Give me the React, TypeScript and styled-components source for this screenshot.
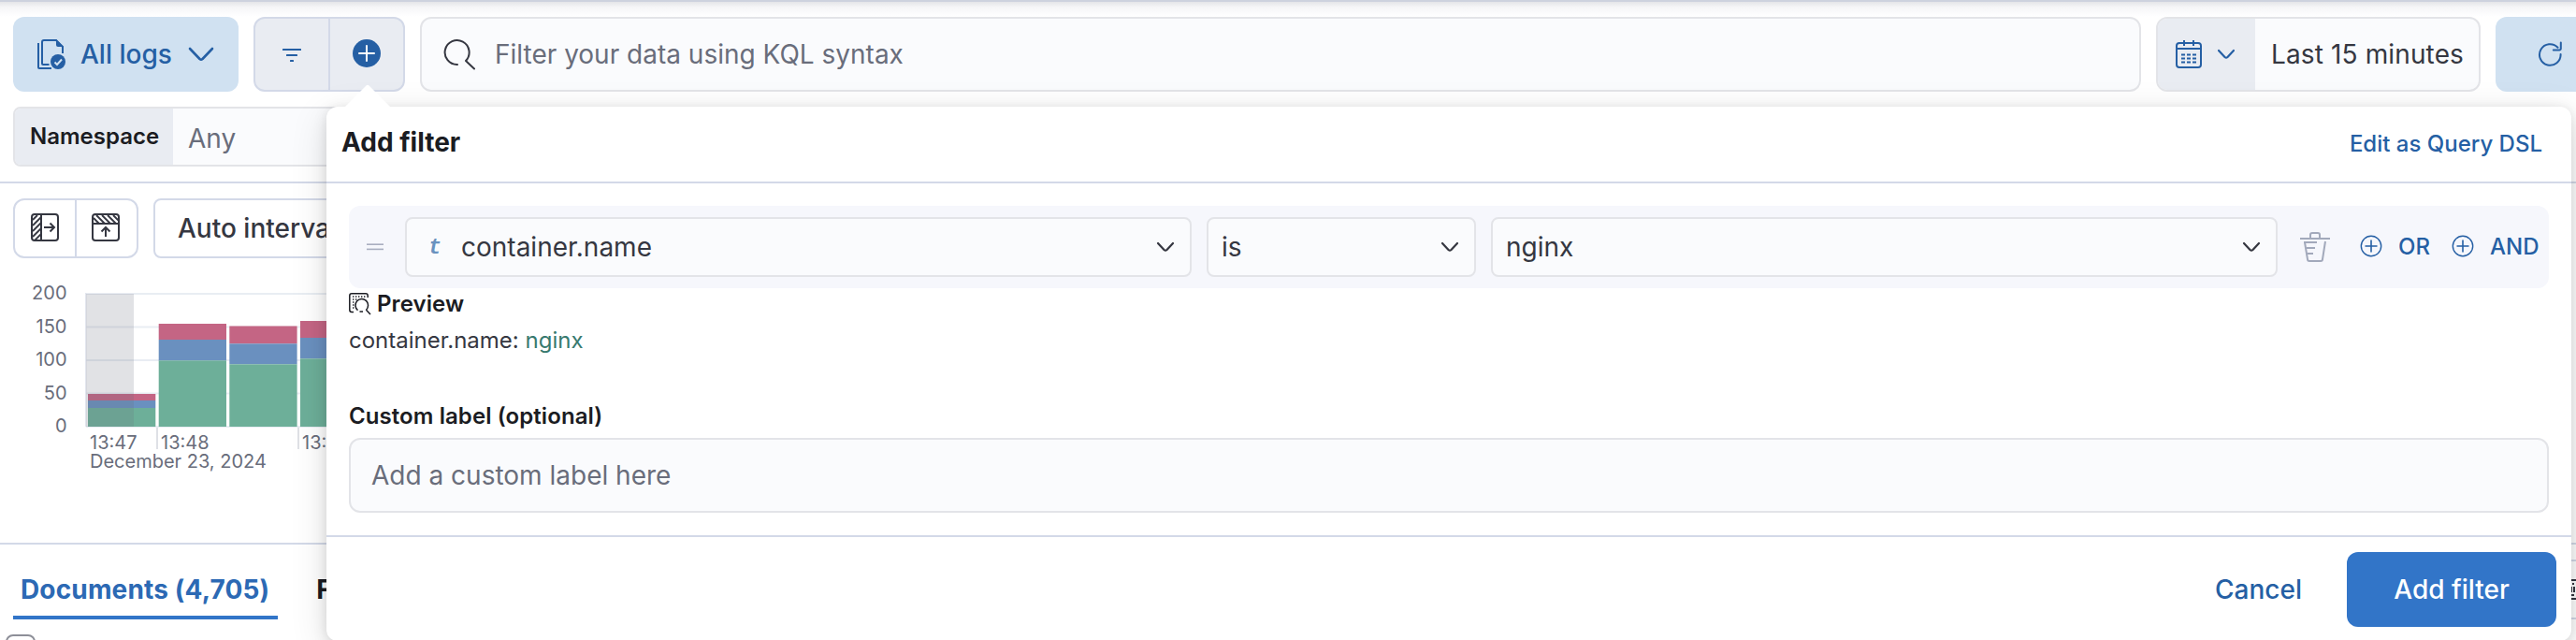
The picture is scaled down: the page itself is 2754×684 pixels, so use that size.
import React from 'react';
import styled, { createGlobalStyle } from 'styled-components';

const c = {
  link: '#255fa4',
  primary: '#3275c8',
  text: '#353741',
  title: '#1b1c22',
  subdued: '#696d7b',
  border: '#d3d9e8',
  fieldBorder: '#e3e4e8',
  field: '#fafbfd',
  shade: '#e9ecf2',
  lightBlue: '#d0e1f1',
};

const GlobalStyle = createGlobalStyle`
  * { box-sizing: border-box; }
  body {
    margin: 0;
    background: #fff;
    overflow: hidden;
    font-family: Inter, "Liberation Sans", sans-serif;
    font-size: 28px;
    color: ${c.text};
  }
  button, input { font: inherit; color: inherit; margin: 0; }
  svg { display: block; flex: none; }
`;

const Page = styled.div`
  position: relative;
  width: 2754px;
  height: 684px;
  overflow: hidden;
  white-space: nowrap;
`;

const HeaderEdge = styled.div`
  height: 18px;
  border-top: 2px solid #cdd2de;
  background: linear-gradient(#e4e5e8, #f5f5f7 35%, #fdfdfe 85%, #fff);
`;

const QueryBar = styled.div`
  display: flex;
  gap: 16px;
  padding-left: 14px;
  height: 80px;
`;

const SoftButton = styled.button<{ $width: number; $inset?: number }>`
  display: flex;
  align-items: center;
  flex: none;
  width: ${p => p.$width}px;
  height: 80px;
  padding: 0 0 0 ${p => p.$inset ?? 26}px;
  border: 0;
  border-radius: 12px;
  background: ${c.lightBlue};
  color: ${c.link};
  font-weight: 500;
`;

const SoftLabel = styled.span`
  flex: none;
  width: 131px;
  padding-left: 16px;
  text-align: left;
`;

const IconGroup = styled.div<{ $filled?: boolean; $height: number }>`
  display: flex;
  flex: none;
  height: ${p => p.$height}px;
  border: 2px solid ${c.border};
  border-radius: 12px;
  background: ${p => (p.$filled ? c.shade : '#fff')};
`;

const GroupButton = styled.button<{ $width: number }>`
  display: flex;
  align-items: center;
  justify-content: center;
  width: ${p => p.$width}px;
  padding: 0;
  border: 0;
  background: none;
  & + & { border-left: 2px solid ${c.border}; }
`;

const SearchField = styled.div`
  display: flex;
  align-items: center;
  flex: none;
  width: 1840px;
  padding-left: 22px;
  gap: 20px;
  border: 2px solid ${c.fieldBorder};
  border-radius: 12px;
  background: ${c.field};
  color: ${c.subdued};
`;

const DatePicker = styled.div`
  display: flex;
  flex: none;
  width: 347px;
  border: 2px solid ${c.fieldBorder};
  border-radius: 12px;
  background: ${c.field};
  overflow: hidden;
`;

const QuickSelect = styled.div`
  display: flex;
  align-items: center;
  width: 104px;
  padding-left: 18px;
  gap: 15px;
  background: ${c.shade};
`;

const DateText = styled.div`
  display: flex;
  align-items: center;
  padding-left: 17px;
  letter-spacing: 0.13px;
`;

const Controls = styled.div`
  padding: 16px 0 16px 14px;
  height: 98px;
  border-bottom: 2px solid ${c.border};
`;

const ControlFrame = styled.div`
  display: flex;
  width: 560px;
  height: 64px;
  border: 2px solid ${c.fieldBorder};
  border-radius: 8px;
  background: ${c.field};
  overflow: hidden;
`;

const ControlLabel = styled.div`
  width: 169px;
  padding: 13px 0 0 16px;
  background: ${c.shade};
  color: ${c.title};
  font-size: 24px;
  line-height: 34px;
  font-weight: 600;
`;

const ControlValue = styled.div`
  padding: 14px 0 0 16px;
  line-height: 36px;
  color: ${c.subdued};
`;

const ChartToolbar = styled.div`
  display: flex;
  gap: 16px;
  padding: 16px 0 0 14px;
`;

const IntervalButton = styled.button`
  width: 320px;
  height: 64px;
  padding: 0 0 1px 24px;
  text-align: left;
  border: 2px solid ${c.border};
  border-radius: 8px;
  background: #fff;
  font-weight: 500;
`;

const ChartArea = styled.div`
  height: 306px;
  padding-top: 14px;
  border-bottom: 2px solid ${c.border};
  text { font-size: 20px; fill: ${c.subdued}; }
`;

const Tabs = styled.div`
  display: flex;
  height: 80px;
  padding-left: 14px;
  gap: 33px;
`;

const Tab = styled.div<{ $active?: boolean }>`
  height: 80px;
  padding: 30px 9px 0 8px;
  line-height: 36px;
  font-weight: 700;
  letter-spacing: 0.15px;
  color: ${p => (p.$active ? '#2c69b4' : c.title)};
  border-bottom: 4px solid ${p => (p.$active ? c.primary : 'transparent')};
`;

const TableHead = styled.div`
  padding: 16px 0 0 6px;
`;

const Checkbox = styled.div`
  width: 32px;
  height: 32px;
  border: 2px solid #8d8f98;
  border-radius: 8px;
`;

const GridControls = styled.div`
  position: absolute;
  right: 0;
  top: 598px;
  width: 60px;
  height: 64px;
  display: flex;
  align-items: center;
  justify-content: flex-end;
  border: 2px solid ${c.border};
  border-width: 2px 0;
`;

const Popover = styled.section`
  position: absolute;
  left: 349px;
  top: 114px;
  width: 2400px;
  height: 571px;
  border-radius: 12px;
  background: #fff;
  box-shadow: 0 10px 40px rgba(0, 0, 0, 0.12), 0 4px 16px rgba(0, 0, 0, 0.1), 0 0 8px rgba(0, 0, 0, 0.03);
`;

const Arrow = styled.svg`
  position: absolute;
  left: 20px;
  top: -24px;
`;

const PopoverTitle = styled.header`
  display: flex;
  justify-content: space-between;
  height: 82px;
  padding: 20px 31px 0 16px;
  border-bottom: 2px solid ${c.border};
  color: ${c.title};
  font-weight: 700;
  line-height: 36px;
`;

const TextLink = styled.a`
  color: ${c.link};
  font-size: 24px;
  line-height: 40px;
  font-weight: 500;
`;

const PopoverBody = styled.div`
  display: flex;
  flex-direction: column;
  height: 378px;
  padding: 24px 24px 0;
  border-bottom: 2px solid ${c.border};
`;

const FilterRow = styled.div`
  display: flex;
  align-items: center;
  height: 88px;
  padding-left: 19px;
  border-radius: 12px;
  background: #f6f7fc;
`;

const Select = styled.div<{ $width: number; $gap: number }>`
  display: flex;
  align-items: center;
  width: ${p => p.$width}px;
  height: 64px;
  margin-left: ${p => p.$gap}px;
  padding: 0 16px 0 14px;
  border: 2px solid ${c.fieldBorder};
  border-radius: 8px;
  background: ${c.field};
`;

const SelectValue = styled.span`
  flex: 1;
`;

const TypeToken = styled.span`
  width: 32px;
  margin-right: 12px;
  padding-top: 2px;
  text-align: center;
  color: #6a92bf;
  font: italic bold 23px "Liberation Mono", monospace;
`;

const TrashButton = styled.span`
  margin-left: 24px;
  margin-right: 32px;
`;

const LogicButton = styled.span<{ $width: number }>`
  display: flex;
  align-items: center;
  width: ${p => p.$width}px;
  padding-bottom: 2px;
  gap: 17px;
  color: ${c.link};
  font-size: 24px;
  font-weight: 500;
`;

const PreviewTitle = styled.div`
  display: flex;
  gap: 6px;
  height: 32px;
  padding-top: 5px;
  color: ${c.title};
  font-size: 24px;
  line-height: 24px;
  font-weight: 600;
  letter-spacing: 0.08px;
`;

const PreviewText = styled.div`
  height: 84px;
  padding-top: 8px;
  font-size: 24px;
  line-height: 32px;
`;

const PreviewValue = styled.span`
  color: #387a6f;
`;

const FieldLabel = styled.label`
  height: 44px;
  padding-top: 5px;
  color: ${c.title};
  font-size: 24px;
  line-height: 32px;
  font-weight: 600;
  letter-spacing: 0.08px;
`;

const LabelInput = styled.input`
  width: 100%;
  height: 80px;
  padding: 0 22px;
  border: 2px solid ${c.fieldBorder};
  border-radius: 12px;
  background: ${c.field};
  &::placeholder { color: ${c.subdued}; opacity: 1; }
`;

const Footer = styled.footer`
  display: flex;
  justify-content: flex-end;
  gap: 48px;
  padding: 16px 16px 0 0;
`;

const CancelButton = styled.button`
  height: 80px;
  padding: 0;
  border: 0;
  background: none;
  color: ${c.link};
  font-weight: 500;
`;

const SubmitButton = styled.button`
  width: 224px;
  height: 80px;
  border: 0;
  border-radius: 12px;
  background: ${c.primary};
  color: #fff;
  font-weight: 500;
`;

const Chevron = ({ w = 18, color = c.text, stroke = 2.2 }) => (
  <svg width={w + 2} height={w / 2 + 4} viewBox={`0 0 ${w + 2} ${w / 2 + 4}`} fill="none" stroke={color} strokeWidth={stroke} strokeLinecap="round" strokeLinejoin="round">
    <path d={`M2 2 L${w / 2 - 0.5} ${w / 2} Q${w / 2 + 1} ${w / 2 + 1.2} ${w / 2 + 2.5} ${w / 2} L${w} 2`} />
  </svg>
);

const LogsIcon = () => (
  <svg width="30" height="32" viewBox="0 0 30 32" fill="none" stroke={c.link} strokeWidth="2">
    <path d="M1 4V30a1 1 0 0 0 1 1H15" />
    <path d="M12.5 27H6a1 1 0 0 1-1-1V3a2 2 0 0 1 2-2H20L27 8V15" />
    <path d="M20 0L28 8H22a2 2 0 0 1-2-2Z" fill={c.link} stroke="none" />
    <circle cx="22" cy="24" r="8" fill={c.link} stroke="none" />
    <path d="M18.5 24.5L21 27L26 21.5" stroke={c.lightBlue} />
  </svg>
);

const FilterIcon = () => (
  <svg width="20" height="18" viewBox="0 0 20 18" fill={c.link}>
    <rect width="20" height="2" y="3" rx=".5" /><rect x="4" y="9" width="12" height="2" rx=".5" /><rect x="8" y="15" width="4" height="2" rx=".5" />
  </svg>
);

const PlusFilled = () => (
  <svg width="30" height="32" viewBox="0 0 30 32">
    <circle cx="15" cy="15" r="15" fill={c.link} />
    <path d="M15 7V23M7 15H23" stroke="#fff" strokeWidth="2" strokeLinecap="round" />
  </svg>
);

const PlusCircle = () => (
  <svg width="24" height="24" viewBox="0 0 24 24" fill="none" stroke={c.link} strokeWidth="1.4">
    <circle cx="12" cy="12" r="10.7" />
    <path d="M12 5.5V18.5M5.5 12H18.5" strokeWidth="1.6" />
  </svg>
);

const SearchIcon = () => (
  <svg width="36" height="34" viewBox="0 0 36 34" fill="none" stroke={c.text} strokeWidth="2" strokeLinecap="round">
    <path d="M16 28A13 13 0 1 1 25 24L34 32.5" strokeLinejoin="round" />
  </svg>
);

const CalendarIcon = () => (
  <svg width="30" height="32" viewBox="0 0 30 32" fill="none" stroke={c.link} strokeWidth="2">
    <rect x="2" y="4" width="26" height="26" rx="3" />
    <path d="M10 1V7M20 1V7M2 10H28" />
    <path d="M7 16H25M7 20H25M7 24H25" strokeDasharray="4 2" transform="translate(0,0.5)" />
  </svg>
);

const RefreshIcon = () => (
  <svg width="28" height="28" viewBox="0 0 28 28" fill="none" stroke={c.link} strokeWidth="2" strokeLinecap="round" strokeLinejoin="round">
    <path d="M24.6 14A11.3 11.3 0 1 1 21.5 6.7" />
    <path d="M24.8 1.5V8a1.6 1.6 0 0 1-1.6 1.6H16.8" />
  </svg>
);

const PanelLeftIcon = () => (
  <svg width="30" height="32" viewBox="0 0 30 32" fill="none" stroke={c.text} strokeWidth="2">
    <rect x="1" y="1" width="28" height="28" rx="3" />
    <path d="M11 1V29" />
    <path d="M2 7L7 2M2 13L11 4M2 19L11 10M2 25L11 16M4 29L11 22" strokeWidth="1.8" />
    <path d="M14 15H25M20.5 10.5L25 15L20.5 19.5" />
  </svg>
);

const PanelTopIcon = () => (
  <svg width="32" height="32" viewBox="0 0 32 32" fill="none" stroke={c.text} strokeWidth="2">
    <rect x="1" y="1" width="28" height="28" rx="3" />
    <path d="M1 11H29" />
    <path d="M2 5L8 11M5 2L14 11M11 2L20 11M17 2L26 11M23 2L29 8" strokeWidth="1.8" />
    <path d="M15 25V15M10.5 19.5L15 15L19.5 19.5" />
  </svg>
);

const DragHandle = () => (
  <svg width="18" height="8" viewBox="0 0 18 8" fill="#a9aec0">
    <rect width="18" height="1.6" y=".4" /><rect y="5.6" width="18" height="1.6" />
  </svg>
);

const TrashIcon = () => (
  <svg width="32" height="32" viewBox="0 0 32 32" fill="none" stroke="#a2a9bb" strokeWidth="2">
    <path d="M0 7H32M11 6V3a2 2 0 0 1 2-2H19a2 2 0 0 1 2 2V6" />
    <path d="M4 11H18M5 11L8 29a2 2 0 0 0 2 2H22a2 2 0 0 0 2-2L27 10M7 17H16M8 23H14" />
  </svg>
);

const PreviewIcon = () => (
  <svg width="24" height="24" viewBox="0 0 24 24" fill="none" stroke={c.title} strokeWidth="1.5">
    <path d="M5 20.5H3A2.2 2.2 0 0 1 .8 18.3V3A2.2 2.2 0 0 1 3 .8H18A2.2 2.2 0 0 1 20.2 3V5" />
    <path d="M4 4H18M4 7H10M4 10H7M4 13H6M4 16H6" strokeDasharray="1.4 1.6" />
    <path d="M18.5 18.2A6.8 6.8 0 1 0 9.5 18.6M11.5 20H15M18.3 18L23 23" />
  </svg>
);

const bars = [
  { x: 94, top: 421, blue: 428, green: 436 },
  { x: 169.7, top: 346, blue: 363, green: 385.3 },
  { x: 245.3, top: 348.5, blue: 367.3, green: 389.3 },
  { x: 321, top: 343, blue: 361, green: 383.3 },
];

const Histogram = () => (
  <svg width="640" height="240" viewBox="0 290 640 240">
    {[314, 349.5, 385, 420.5, 456].map((y, i) => (
      <React.Fragment key={y}>
        <rect x="92" y={y - 1} width="540" height="2" fill="#e9edf3" />
        <text x="71.5" y={y + 6} textAnchor="end">{200 - i * 50}</text>
      </React.Fragment>
    ))}
    <rect x="91" y="313" width="1.5" height="143" fill="#e3e6ee" />
    {bars.map(b => (
      <g key={b.x}>
        <rect x={b.x} y={b.top} width="72.3" height={b.blue - b.top} fill="#c46584" />
        <rect x={b.x} y={b.blue} width="72.3" height={b.green - b.blue} fill="#6a90bf" />
        <rect x={b.x} y={b.green} width="72.3" height={456 - b.green} fill="#6daf99" />
      </g>
    ))}
    <rect x="92" y="314" width="51" height="142" fill="#6b6e7b" fillOpacity=".2" />
    <rect x="167" y="457" width="2" height="23" fill="#dfe1e6" />
    <rect x="318" y="457" width="2" height="23" fill="#dfe1e6" />
    <text x="96" y="479.5">13:47</text>
    <text x="172" y="479.5">13:48</text>
    <text x="323" y="479.5">13:50</text>
    <text x="96" y="500">December 23, 2024</text>
  </svg>
);

export default function App() {
  return (
    <Page>
      <GlobalStyle />
      <HeaderEdge />
      <QueryBar>
        <SoftButton $width={241}>
          <LogsIcon />
          <SoftLabel>All logs</SoftLabel>
          <Chevron w={26} color={c.link} stroke={2.6} />
        </SoftButton>
        <IconGroup $filled $height={80}>
          <GroupButton $width={78}><FilterIcon /></GroupButton>
          <GroupButton $width={80}><PlusFilled /></GroupButton>
        </IconGroup>
        <SearchField><SearchIcon />Filter your data using KQL syntax</SearchField>
        <DatePicker>
          <QuickSelect><CalendarIcon /><Chevron color={c.link} /></QuickSelect>
          <DateText>Last 15 minutes</DateText>
        </DatePicker>
        <SoftButton $width={160} $inset={45}><RefreshIcon /></SoftButton>
      </QueryBar>
      <Controls>
        <ControlFrame>
          <ControlLabel>Namespace</ControlLabel>
          <ControlValue>Any</ControlValue>
        </ControlFrame>
      </Controls>
      <ChartToolbar>
        <IconGroup $height={64}>
          <GroupButton $width={64}><PanelLeftIcon /></GroupButton>
          <GroupButton $width={66}><PanelTopIcon /></GroupButton>
        </IconGroup>
        <IntervalButton>Auto interval</IntervalButton>
      </ChartToolbar>
      <ChartArea><Histogram /></ChartArea>
      <Tabs>
        <Tab $active>Documents (4,705)</Tab>
        <Tab>Field statistics</Tab>
      </Tabs>
      <TableHead><Checkbox /></TableHead>
      <GridControls>
        <svg width="6" height="22" viewBox="0 0 6 22" fill="none" stroke={c.text} strokeWidth="2">
          <path d="M0 1H6M2 5H4M1 8V14M4 8V14M0 17H4M0 21H6" />
        </svg>
      </GridControls>
      <Popover>
        <Arrow width="48" height="25" viewBox="0 0 48 25"><path d="M0 24L22.5 1.5Q24 0 25.5 1.5L48 24V25H0Z" fill="#fff" /></Arrow>
        <PopoverTitle>
          Add filter
          <TextLink>Edit as Query DSL</TextLink>
        </PopoverTitle>
        <PopoverBody>
          <FilterRow>
            <DragHandle />
            <Select $width={841} $gap={23}>
              <TypeToken>t</TypeToken>
              <SelectValue>container.name</SelectValue>
              <Chevron />
            </Select>
            <Select $width={288} $gap={16}><SelectValue>is</SelectValue><Chevron /></Select>
            <Select $width={841} $gap={16}><SelectValue>nginx</SelectValue><Chevron /></Select>
            <TrashButton><TrashIcon /></TrashButton>
            <LogicButton $width={98}><PlusCircle />OR</LogicButton>
            <LogicButton $width={98}><PlusCircle />AND</LogicButton>
          </FilterRow>
          <PreviewTitle><PreviewIcon />Preview</PreviewTitle>
          <PreviewText>container.name: <PreviewValue>nginx</PreviewValue></PreviewText>
          <FieldLabel htmlFor="custom-label">Custom label (optional)</FieldLabel>
          <LabelInput id="custom-label" placeholder="Add a custom label here" />
        </PopoverBody>
        <Footer>
          <CancelButton>Cancel</CancelButton>
          <SubmitButton>Add filter</SubmitButton>
        </Footer>
      </Popover>
    </Page>
  );
}
